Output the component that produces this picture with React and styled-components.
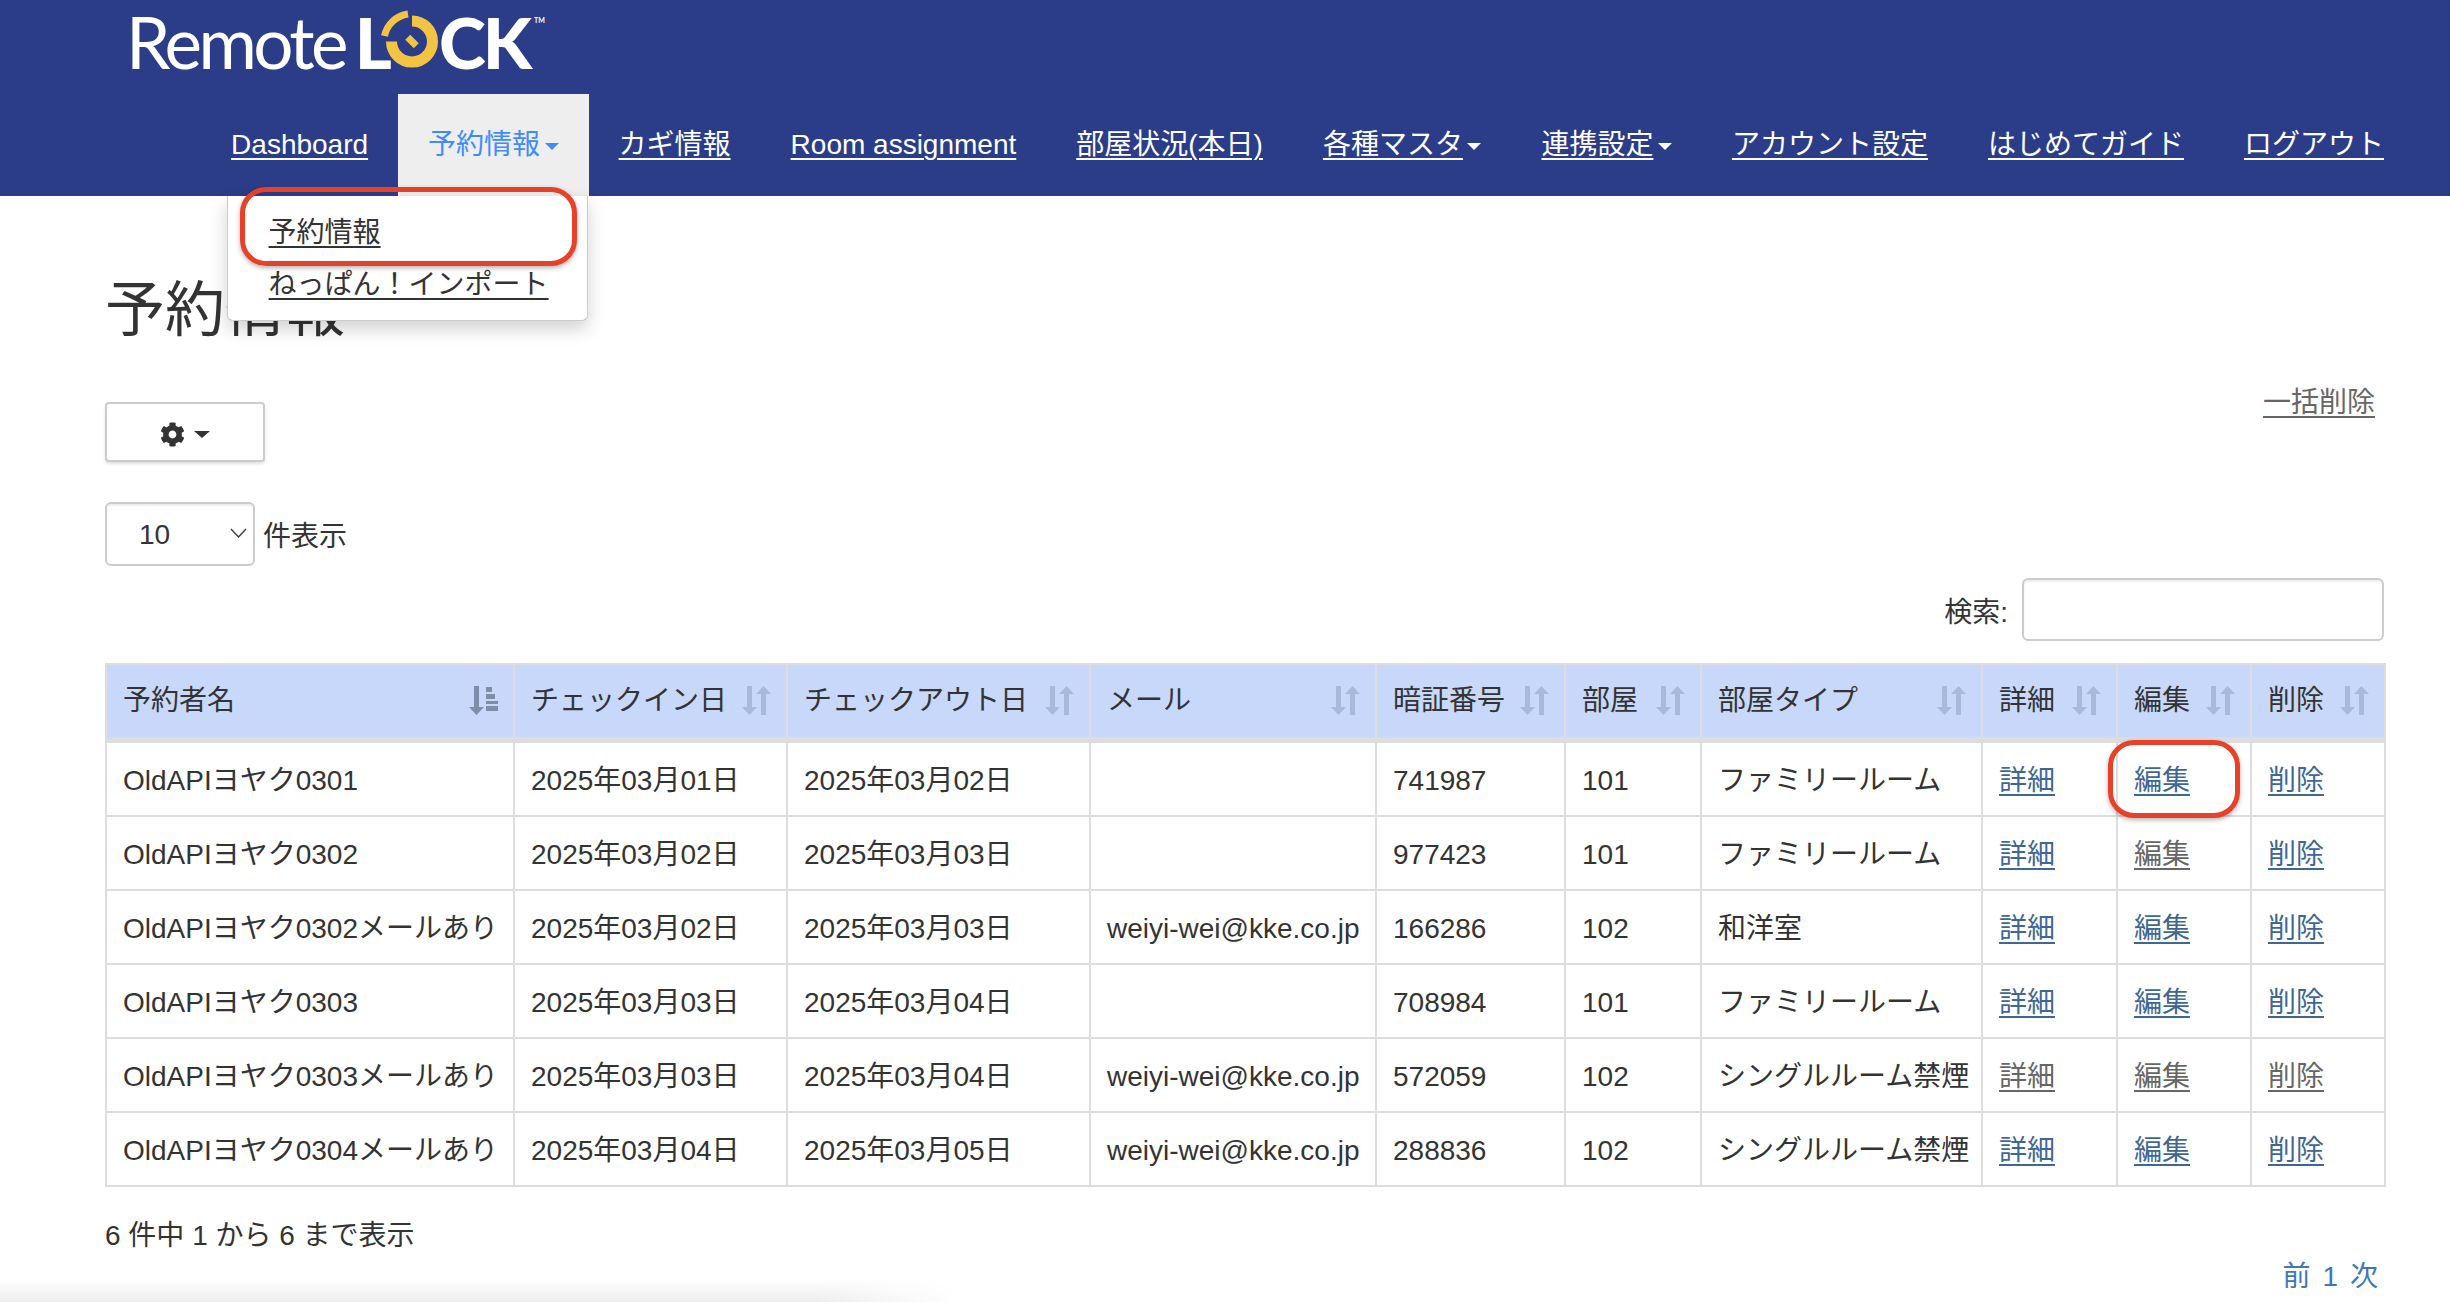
import React from "react";
import styled, { createGlobalStyle } from "styled-components";
import { FaCog } from "react-icons/fa";

const GlobalStyle = createGlobalStyle`
  html, body {
    margin: 0;
    padding: 0;
    background: #fff;
  }
  body {
    font-family: "Liberation Sans", "Noto Sans CJK JP", sans-serif;
    font-size: 28px;
    color: #333;
  }
`;

const Page = styled.div`
  position: relative;
  height: 1302px;
  overflow: hidden;
`;

const Header = styled.header`
  height: 196px;
  background: #2b3d89;
  display: flex;
  flex-direction: column;
`;

const LogoRow = styled.div`
  height: 94px;
  padding-left: 126px;
  display: flex;
  align-items: flex-start;
`;

const Logo = styled.div`
  display: flex;
  align-items: flex-start;
  margin-top: 3px;
  font-family: Lato, sans-serif;
  font-size: 71px;
  line-height: 78px;
  color: #fff;
`;

const LogoLight = styled.span`
  letter-spacing: -3.6px;
  margin-right: 10px;
`;

const LogoBold = styled.span`
  font-weight: 900;
  letter-spacing: -3px;
`;

const LogoRing = styled.svg`
  width: 60px;
  height: 62px;
  margin: 5px -3px 0 -7px;
  overflow: visible;
`;

const Trademark = styled.span`
  font-size: 7px;
  line-height: 12px;
  margin: 11px 0 0 5px;
  font-weight: 700;
`;

const Nav = styled.nav`
  height: 102px;
  padding-right: 36px;
  display: flex;
  justify-content: flex-end;
`;

const NavItem = styled.div`
  position: relative;
  padding: 32px 30px 0;
  line-height: 38px;
  white-space: nowrap;
  background: ${(p) => (p.$active ? "#eee" : "transparent")};
  color: ${(p) => (p.$active ? "#3f8bfd" : "#fff")};
`;

const NavLink = styled.a`
  color: inherit;
  text-decoration: ${(p) => (p.$active ? "none" : "underline")};
  text-underline-offset: 4px;
  text-decoration-thickness: 2px;
`;

const Caret = styled.span`
  display: inline-block;
  vertical-align: middle;
  margin-left: ${(p) => p.$gap ?? 4.5}px;
  border-top: ${(p) => p.$h || 7}px solid currentColor;
  border-left: ${(p) => p.$w || 7}px solid transparent;
  border-right: ${(p) => p.$w || 7}px solid transparent;
`;

const Dropdown = styled.div`
  position: absolute;
  top: 100%;
  right: 1px;
  width: 361px;
  height: 125px;
  box-sizing: border-box;
  padding-top: 18px;
  background: #fff;
  border: 1px solid #ccc;
  border-top: none;
  border-radius: 0 0 6px 6px;
  box-shadow: 0 8px 18px rgba(0, 0, 0, 0.18);
  z-index: 5;
`;

const DropdownItem = styled.a`
  display: block;
  position: relative;
  padding-left: 41px;
  height: 52px;
  line-height: 38px;
  color: #333;
  text-decoration: underline;
  text-underline-offset: 4px;
  text-decoration-thickness: 2px;
`;

const Highlight = styled.span`
  position: absolute;
  box-sizing: border-box;
  border: 5px solid #e8412a;
  border-radius: 26px;
  box-shadow: 0 2px 5px rgba(0, 0, 0, 0.3);
  pointer-events: none;
  z-index: 6;
  top: ${(p) => p.$top}px;
  left: ${(p) => p.$left}px;
  width: ${(p) => p.$width}px;
  height: ${(p) => p.$height}px;
`;

const Content = styled.main`
  padding: 0 66px 0 105px;
`;

const Title = styled.h1`
  margin: 75px 0 0;
  height: 109px;
  font-size: 60px;
  font-weight: 400;
  line-height: 80px;
`;

const ToolRow = styled.div`
  display: flex;
  justify-content: space-between;
  align-items: flex-start;
  height: 122px;
`;

const GearButton = styled.button`
  margin-top: 22px;
  width: 160px;
  height: 60px;
  padding: 5px 0 0;
  display: flex;
  align-items: center;
  justify-content: center;
  gap: 9px;
  background: #fff;
  color: #333;
  border: 2px solid #ccc;
  border-radius: 4px;
  box-shadow: 0 2px 3px rgba(0, 0, 0, 0.12);
`;

const BulkLink = styled.a`
  margin-right: 9px;
  line-height: 46px;
  color: #666;
  text-decoration: underline;
  text-underline-offset: 4px;
  text-decoration-thickness: 2px;
`;

const LengthRow = styled.div`
  display: flex;
  align-items: center;
  gap: 8px;
  height: 64px;
`;

const SelectBox = styled.div`
  position: relative;
  width: 150px;
  height: 64px;
`;

const Select = styled.select`
  appearance: none;
  width: 100%;
  height: 100%;
  padding: 0 0 0 32px;
  font: inherit;
  color: #333;
  background: #fff;
  border: 2px solid #ccc;
  border-radius: 6px;
  box-shadow: inset 0 2px 2px rgba(0, 0, 0, 0.07);
`;

const Chevron = styled.svg`
  position: absolute;
  right: 8px;
  top: 26px;
  width: 17px;
  height: 10px;
  pointer-events: none;
`;

const SearchRow = styled.div`
  margin-top: 12px;
  display: flex;
  justify-content: flex-end;
  align-items: center;
  gap: 14px;
`;

const SearchInput = styled.input`
  box-sizing: border-box;
  width: 362px;
  height: 63px;
  background: #fff;
  border: 2px solid #ccc;
  border-radius: 6px;
  box-shadow: inset 0 2px 2px rgba(0, 0, 0, 0.07);
`;

const Table = styled.table`
  margin-top: 22px;
  width: 2279px;
  table-layout: fixed;
  border-collapse: collapse;
`;

const Th = styled.th`
  height: 72px;
  padding: 0 15px 0 16px;
  background: #c8d8fb;
  border: 2px solid #ddd;
  border-bottom-width: 6px;
  font-weight: 400;
  text-align: left;
  white-space: nowrap;
`;

const ThInner = styled.div`
  display: flex;
  justify-content: space-between;
  align-items: center;
  line-height: 38px;
  margin-top: -1px;
`;

const SortIcon = styled.svg`
  width: 29px;
  height: 29px;
  flex: none;
  color: ${(p) => (p.$active ? "#7f8da9" : "#a9b9da")};
`;

const Td = styled.td`
  position: relative;
  height: 69px;
  padding: 3px 0 0 16px;
  border: 2px solid #ddd;
  line-height: 38px;
  white-space: nowrap;
  vertical-align: middle;
`;

const RowLink = styled.a`
  color: ${(p) => (p.$muted ? "#666" : "#3f6794")};
  text-decoration: underline;
  text-underline-offset: 4px;
  text-decoration-thickness: 2px;
`;

const Info = styled.div`
  margin-top: 30px;
  line-height: 38px;
`;

const Pager = styled.div`
  margin-top: 3px;
  padding-right: 6px;
  display: flex;
  justify-content: flex-end;
  gap: 12px;
  line-height: 38px;
  color: #3f78b5;
`;

const BottomFade = styled.div`
  position: absolute;
  left: 0;
  bottom: 0;
  width: 960px;
  height: 24px;
  background: linear-gradient(to top, rgba(0, 0, 0, 0.07), rgba(0, 0, 0, 0));
  -webkit-mask-image: linear-gradient(to right, #000 85%, transparent);
  mask-image: linear-gradient(to right, #000 85%, transparent);
`;

const navItems = [
  { label: "Dashboard" },
  { label: "予約情報", caret: true, active: true },
  { label: "カギ情報" },
  { label: "Room assignment" },
  { label: "部屋状況(本日)" },
  { label: "各種マスタ", caret: true },
  { label: "連携設定", caret: true },
  { label: "アカウント設定" },
  { label: "はじめてガイド" },
  { label: "ログアウト" },
];

const columns = [
  { label: "予約者名", width: 408, sorted: true },
  { label: "チェックイン日", width: 273 },
  { label: "チェックアウト日", width: 303 },
  { label: "メール", width: 286 },
  { label: "暗証番号", width: 189 },
  { label: "部屋", width: 136 },
  { label: "部屋タイプ", width: 281 },
  { label: "詳細", width: 135 },
  { label: "編集", width: 134 },
  { label: "削除", width: 134 },
];

const mail = "weiyi-wei@kke.co.jp";

const rows = [
  ["OldAPIヨヤク0301", "2025年03月01日", "2025年03月02日", "", "741987", "101", "ファミリールーム"],
  ["OldAPIヨヤク0302", "2025年03月02日", "2025年03月03日", "", "977423", "101", "ファミリールーム"],
  ["OldAPIヨヤク0302メールあり", "2025年03月02日", "2025年03月03日", mail, "166286", "102", "和洋室"],
  ["OldAPIヨヤク0303", "2025年03月03日", "2025年03月04日", "", "708984", "101", "ファミリールーム"],
  ["OldAPIヨヤク0303メールあり", "2025年03月03日", "2025年03月04日", mail, "572059", "102", "シングルルーム禁煙"],
  ["OldAPIヨヤク0304メールあり", "2025年03月04日", "2025年03月05日", mail, "288836", "102", "シングルルーム禁煙"],
];

const SortGlyph = ({ active }) => (
  <SortIcon $active={active} viewBox="0 0 29 29" fill="currentColor">
    <path d="M5 0h5v21h5l-7.5 8L0 21h5z" />
    {active ? (
      <path d="M17 1h6v5h-6zM17 8h9v5h-9zM17 15h12v3h-12zM17 20h12v5h-12z" />
    ) : (
      <path d="M19 29h5V8h5l-7.5-8L14 8h5z" />
    )}
  </SortIcon>
);

const App = () => (
  <Page>
    <GlobalStyle />
    <Header>
      <LogoRow>
        <Logo>
          <LogoLight>Remote</LogoLight>
          <LogoBold>L</LogoBold>
          <LogoRing viewBox="0 0 60 62" fill="none">
            <path d="M30 13A20.5 20.5 0 1 1 9.5 33.5" stroke="#f3c444" strokeWidth="11" />
            <path d="M2.5 28A28 28 0 0 1 26 6" stroke="#f3c444" strokeWidth="7" />
            <rect x="24" y="30" width="12" height="7" fill="#f3c444" transform="rotate(45 30 33.5)" />
          </LogoRing>
          <LogoBold>CK</LogoBold>
          <Trademark>TM</Trademark>
        </Logo>
      </LogoRow>
      <Nav>
        {navItems.map((item) => (
          <NavItem key={item.label} $active={item.active}>
            <NavLink $active={item.active}>{item.label}</NavLink>
            {item.caret && <Caret />}
            {item.active && (
              <Dropdown>
                <Highlight $top={-9} $left={12} $width={337} $height={79} />
                <DropdownItem>予約情報</DropdownItem>
                <DropdownItem>ねっぱん！インポート</DropdownItem>
              </Dropdown>
            )}
          </NavItem>
        ))}
      </Nav>
    </Header>
    <Content>
      <Title>予約情報</Title>
      <ToolRow>
        <GearButton>
          <FaCog size={25} />
          <Caret $gap={0} $w={8} $h={7} />
        </GearButton>
        <BulkLink>一括削除</BulkLink>
      </ToolRow>
      <LengthRow>
        <SelectBox>
          <Select defaultValue="10">
            <option>10</option>
            <option>25</option>
            <option>50</option>
          </Select>
          <Chevron viewBox="0 0 17 10" fill="none" stroke="#444" strokeWidth="1.5">
            <path d="M1 1l7.5 8L16 1" />
          </Chevron>
        </SelectBox>
        件表示
      </LengthRow>
      <SearchRow>
        検索:
        <SearchInput />
      </SearchRow>
      <Table>
        <colgroup>
          {columns.map((col) => (
            <col key={col.label} width={col.width} />
          ))}
        </colgroup>
        <thead>
          <tr>
            {columns.map((col) => (
              <Th key={col.label}>
                <ThInner>
                  {col.label}
                  <SortGlyph active={col.sorted} />
                </ThInner>
              </Th>
            ))}
          </tr>
        </thead>
        <tbody>
          {rows.map((row, index) => (
            <tr key={row[0]}>
              {row.map((cell, i) => (
                <Td key={i}>{cell}</Td>
              ))}
              <Td>
                <RowLink $muted={index === 4}>詳細</RowLink>
              </Td>
              <Td>
                {index === 0 && <Highlight $top={-3} $left={-10} $width={132} $height={78} />}
                <RowLink $muted={index === 1 || index === 4}>編集</RowLink>
              </Td>
              <Td>
                <RowLink $muted={index === 4}>削除</RowLink>
              </Td>
            </tr>
          ))}
        </tbody>
      </Table>
      <Info>6 件中 1 から 6 まで表示</Info>
      <Pager>
        <span>前</span>
        <span>1</span>
        <span>次</span>
      </Pager>
    </Content>
    <BottomFade />
  </Page>
);

export default App;
